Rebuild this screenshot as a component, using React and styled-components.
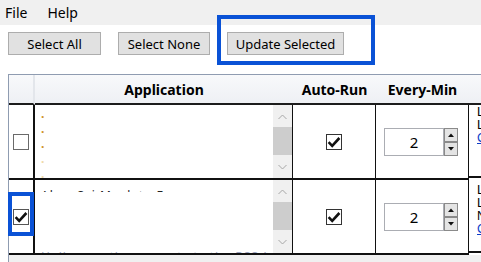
import React from 'react';
import styled, { createGlobalStyle } from 'styled-components';

const Global = createGlobalStyle`
  html, body { margin: 0; padding: 0; background: #fff; }
  body { font-family: "Noto Sans", "Open Sans", sans-serif; }
`;

const Window = styled.div`
  position: relative;
  width: 481px;
  height: 262px;
  overflow: hidden;
  background: #fff;
  display: flex;
  flex-direction: column;
  font-family: "Noto Sans", "Open Sans", sans-serif;
  color: #000;
`;

const MenuBar = styled.div`
  height: 25px;
  flex: none;
  background: #f0f0f0;
  display: flex;
  align-items: center;
  padding-left: 5px;
  gap: 20px;
  font-size: 14px;
`;

const MenuItem = styled.span`
  line-height: 25px;
`;

const Toolbar = styled.div`
  flex: none;
  display: flex;
  gap: 17px;
  padding: 7px 0 0 8px;
`;

const Button = styled.button`
  width: ${(p) => p.$w}px;
  height: 23px;
  padding: 0;
  background: #e1e1e1;
  border: 1px solid #adadad;
  border-radius: 0;
  font-family: "Noto Sans", sans-serif;
  font-size: 13px;
  color: #000;
`;

const GridArea = styled.div`
  flex: 1;
  margin: 19px 0 0 8px;
  border-top: 1px solid #8f9cb1;
  border-left: 1px solid #8f9cb1;
  background: #f0f0f0;
  overflow: hidden;
`;

const Grid = styled.div`
  display: grid;
  grid-template-columns: 26px 258px 83px 93px 90px;
  width: max-content;
  background: #fff;
`;

const HeadCell = styled.div`
  height: 28px;
  border-bottom: 2px solid #1c1c1c;
  border-right: ${(p) => (p.$corner ? '2px solid #e3e6eb' : 'none')};
  background: linear-gradient(#f8f9fb, #eef0f4);
  display: flex;
  align-items: center;
  justify-content: center;
  font-weight: 700;
  font-size: 14px;
`;

const Cell = styled.div`
  height: 73px;
  border-bottom: 2px solid #111;
  border-right: ${(p) => (p.$thick ? 2 : 1)}px solid #111;
  background: #fff;
  display: flex;
  align-items: center;
  justify-content: ${(p) => p.$justify || 'center'};
  padding-left: ${(p) => p.$padLeft || 0}px;
  overflow: hidden;
`;

const Box = styled.span`
  width: 16px;
  height: 16px;
  box-sizing: border-box;
  border: 1px solid ${(p) => p.$border || '#333'};
  background: #fff;
  display: flex;
  align-items: center;
  justify-content: center;
`;

const AppCell = styled.div`
  height: 73px;
  border-bottom: 2px solid #111;
  border-right: 1px solid #111;
  background: #fff;
  display: flex;
  overflow: hidden;
`;

const TextArea = styled.div`
  flex: 1;
  padding: ${(p) => p.$padTop}px 0 0 6px;
  font-size: 11px;
  line-height: 15px;
  overflow: hidden;
`;

const Dot = styled.div`
  color: ${(p) => (p.$faint ? '#efd9a8' : '#cf9128')};
  font-weight: 700;
  font-size: 12px;
  line-height: 15px;
  height: 15px;
`;

const ClipLine = styled.div`
  height: ${(p) => p.$h}px;
  overflow: hidden;
  margin-top: ${(p) => p.$top}px;
  color: ${(p) => p.$color};
  font-size: 12px;
  line-height: 15px;
  white-space: nowrap;
  letter-spacing: 1px;
`;

const ClipInner = styled.div`
  margin-top: ${(p) => p.$shift}px;
`;

const ScrollBar = styled.div`
  width: 19px;
  background: #f0f0f0;
  display: flex;
  flex-direction: column;
  align-items: center;
  padding: 3px 0;
  box-sizing: border-box;
`;

const Arrow = styled.div`
  height: 17px;
  width: 100%;
  display: flex;
  align-items: center;
  justify-content: center;
`;

const Track = styled.div`
  flex: 1;
  width: 100%;
  padding: 2px 0;
  box-sizing: border-box;
`;

const Thumb = styled.div`
  height: 28px;
  background: #cdcdcd;
`;

const SpinWrap = styled.div`
  display: flex;
  align-items: stretch;
`;

const SpinBox = styled.div`
  width: 60px;
  height: 28px;
  box-sizing: border-box;
  border: 1px solid #abadb3;
  display: flex;
  align-items: center;
  justify-content: center;
  font-size: 15px;
`;

const SpinButtons = styled.div`
  display: flex;
  flex-direction: column;
`;

const SpinBtn = styled.div`
  width: 14px;
  height: 14px;
  box-sizing: border-box;
  border: 1px solid #8a8a8a;
  background: #e4e4e4;
  display: flex;
  align-items: center;
  justify-content: center;
`;

const InfoCell = styled.div`
  height: 73px;
  border-bottom: 2px solid #111;
  background: #fff;
  padding: ${(p) => p.$padTop}px 0 0 8px;
  box-sizing: border-box;
  font-family: "Liberation Sans", Arial, sans-serif;
  font-size: 12.5px;
  line-height: 13px;
  white-space: nowrap;
  overflow: hidden;
`;

const InfoLine = styled.div`
  color: ${(p) => (p.$link ? '#0b3cc8' : '#000')};
  text-decoration: ${(p) => (p.$link ? 'underline' : 'none')};
`;

const Highlight = styled.div`
  position: absolute;
  left: ${(p) => p.$x}px;
  top: ${(p) => p.$y}px;
  width: ${(p) => p.$w}px;
  height: ${(p) => p.$h}px;
  box-sizing: border-box;
  border: 4px solid #0a52d6;
  pointer-events: none;
`;

const Check = () => (
  <svg width="14" height="14" viewBox="0 0 14 14">
    <path d="M1.6 7.2 L5.2 10.8 L12.4 3" fill="none" stroke="#111" strokeWidth="2.6" />
  </svg>
);

const Chevron = ({ up }) => (
  <svg width="9" height="6" viewBox="0 0 9 6">
    <path d={up ? 'M0.5 5 L4.5 1 L8.5 5' : 'M0.5 1 L4.5 5 L8.5 1'} fill="none" stroke="#a6a6a6" strokeWidth="1" />
  </svg>
);

const Tri = ({ up }) => (
  <svg width="6" height="4" viewBox="0 0 6 4">
    <path d={up ? 'M0 4 L3 0.5 L6 4 Z' : 'M0 0 L3 3.5 L6 0 Z'} fill="#111" />
  </svg>
);

const Scroll = () => (
  <ScrollBar>
    <Arrow><Chevron up /></Arrow>
    <Track><Thumb /></Track>
    <Arrow><Chevron /></Arrow>
  </ScrollBar>
);

const Spinner = ({ value }) => (
  <SpinWrap>
    <SpinBox>{value}</SpinBox>
    <SpinButtons>
      <SpinBtn><Tri up /></SpinBtn>
      <SpinBtn><Tri /></SpinBtn>
    </SpinButtons>
  </SpinWrap>
);

const rows = [
  {
    info: ['Last Run: never', 'Last Result: none', 'Configure...'],
    infoPad: 1,
  },
  {
    info: ['Last Run: never', 'Last Result: none', 'Next Run: pending', 'Configure...'],
    infoPad: 4,
  },
];

const Info = ({ row }) => (
  <InfoCell $padTop={row.infoPad}>
    {row.info.map((t, i) => (
      <InfoLine key={i} $link={i === row.info.length - 1}>{t}</InfoLine>
    ))}
  </InfoCell>
);

export default function App() {
  return (
    <>
      <Global />
      <Window>
        <MenuBar>
          <MenuItem>File</MenuItem>
          <MenuItem>Help</MenuItem>
        </MenuBar>
        <Toolbar>
          <Button $w={93}>Select All</Button>
          <Button $w={92}>Select None</Button>
          <Button $w={117}>Update Selected</Button>
        </Toolbar>
        <GridArea>
          <Grid>
            <HeadCell $corner />
            <HeadCell>Application</HeadCell>
            <HeadCell>Auto-Run</HeadCell>
            <HeadCell>Every-Min</HeadCell>
            <HeadCell />

            <Cell $thick>
              <Box $border="#6a6a6a" />
            </Cell>
            <AppCell>
              <TextArea $padTop={1}>
                <Dot>.</Dot>
                <Dot>.</Dot>
                <Dot>.</Dot>
                <Dot $faint>.</Dot>
                <Dot $faint>.</Dot>
              </TextArea>
              <Scroll />
            </AppCell>
            <Cell>
              <Box><Check /></Box>
            </Cell>
            <Cell $justify="flex-start" $padLeft={8}>
              <Spinner value="2" />
            </Cell>
            <Info row={rows[0]} />

            <Cell $thick>
              <Box $border="#555"><Check /></Box>
            </Cell>
            <AppCell>
              <TextArea $padTop={0}>
                <ClipLine $h={2} $top={10} $color="#222">
                  <ClipInner $shift={-2}>Ahoy Sci Maak to Fe</ClipInner>
                </ClipLine>
                <ClipLine $h={1} $top={60} $color="#9aa3c0">
                  <ClipInner $shift={-3}>Hello, weather report via the RSS feed</ClipInner>
                </ClipLine>
              </TextArea>
              <Scroll />
            </AppCell>
            <Cell>
              <Box><Check /></Box>
            </Cell>
            <Cell $justify="flex-start" $padLeft={8}>
              <Spinner value="2" />
            </Cell>
            <Info row={rows[1]} />
          </Grid>
        </GridArea>
        <Highlight $x={217} $y={15} $w={158} $h={50} />
        <Highlight $x={8} $y={192} $w={26} $h={44} />
      </Window>
    </>
  );
}
